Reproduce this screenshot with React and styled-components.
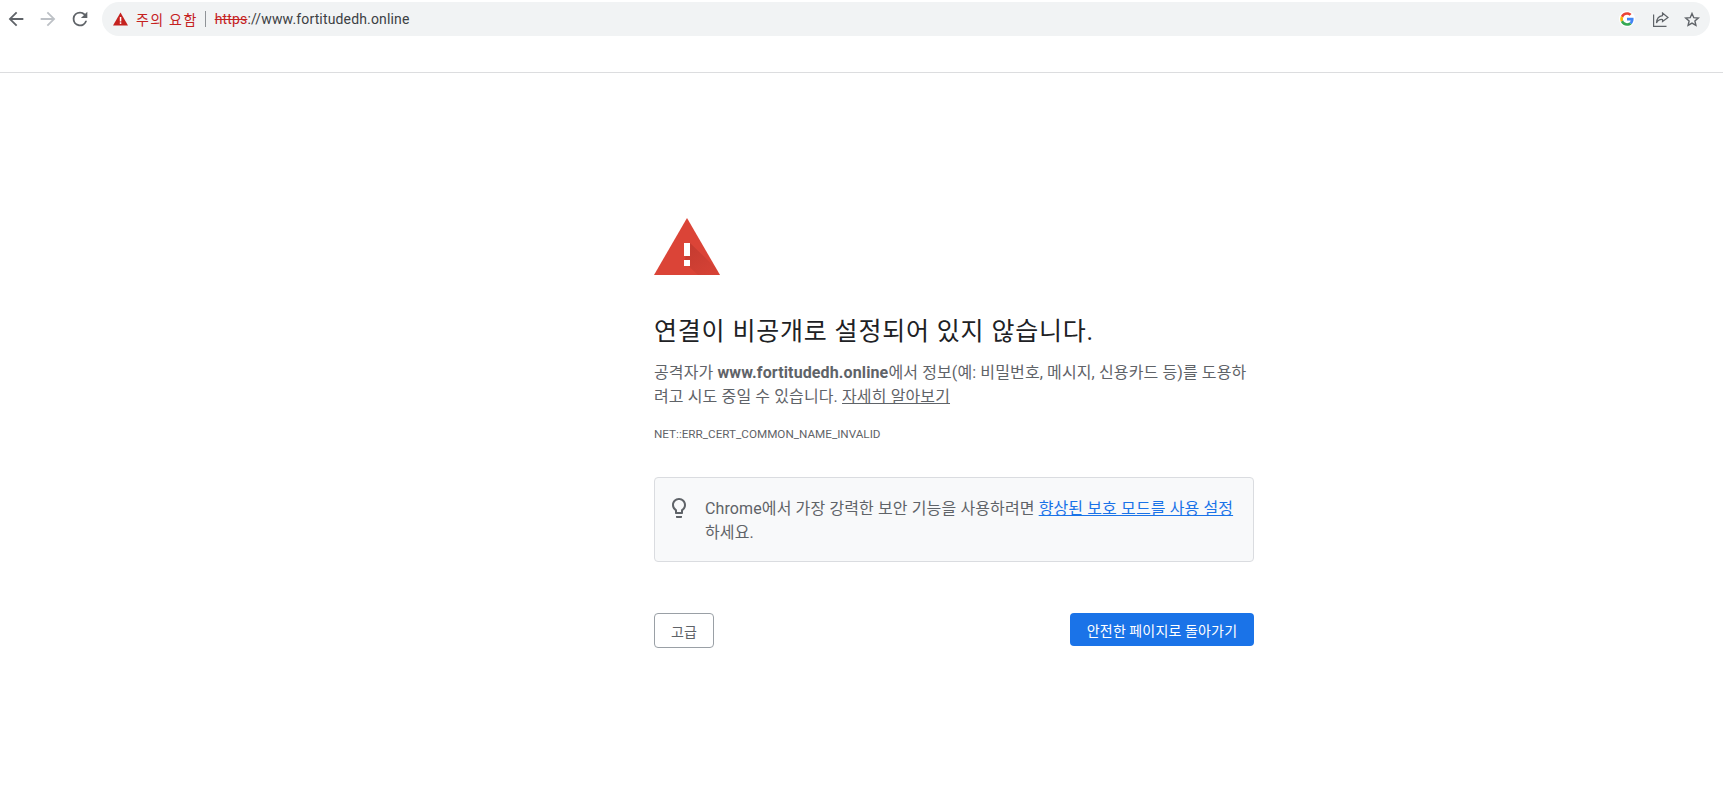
import React from 'react';
import styled, { createGlobalStyle } from 'styled-components';

const Global = createGlobalStyle`
  html, body { margin: 0; padding: 0; background: #fff; }
  body { font-family: Roboto, "Noto Sans CJK KR", sans-serif; overflow: hidden; }
`;
const Page = styled.div`width: 1723px; height: 795px; display: flex; flex-direction: column; overflow: hidden;`;
const Toolbar = styled.header`border-bottom: 1px solid #dcdddf; padding-top: 2px; height: 70px; display: flex; align-items: flex-start;`;
const NavGroup = styled.div`display: flex; gap: 10px; padding: 6px 0 0 5px; width: 95px; box-sizing: border-box;`;
const NavIcon = styled.svg`width: 22px; height: 22px; display: block; fill: ${p => p.$c};`;
const Omnibox = styled.div`margin-left: 7px; width: 1608px; height: 34px; background: #f1f3f4; border-radius: 17px; display: flex; align-items: center; padding: 0 10px 0 11px; box-sizing: border-box;`;
const Warn = styled.span`color: #c5221f; font: 14px "Noto Sans CJK KR", sans-serif; margin-left: 8px; letter-spacing: 1.4px;`;
const Sep = styled.span`width: 1px; height: 16px; background: #8f9397; margin: 0 9px 0 7px;`;
const Url = styled.span`font: 14px Roboto, sans-serif; color: #3c4043; letter-spacing: 0.15px;`;
const Struck = styled.span`color: #c5221f; text-decoration: line-through;`;
const Actions = styled.div`margin-left: auto; display: flex; align-items: center; gap: 15px;`;
const GoogleMark = styled.svg`margin-right: 3px; background: #fff; border-radius: 50%;`;
const Main = styled.main`margin-left: 654px; width: 600px; padding-top: 145px; color: #5f6368;`;
const DangerIcon = styled.svg`display: block;`;
const Heading = styled.h1`margin: 39px 0 0; font-size: 25px; line-height: 36px; font-weight: 400; color: #202124; letter-spacing: 0.8px;`;
const Para = styled.p`margin: 11px 0 0; font-size: 16px; line-height: 24px; letter-spacing: 0.12px;`;
const Learn = styled.a`color: #5f6368; text-decoration: underline;`;
const Code = styled.div`margin-top: 16px; font-size: 11.7px; line-height: 18px; color: #5f6368;`;
const Tip = styled.div`margin-top: 34px; height: 64px; padding: 19px 15px 0 12px; border: 1px solid #dadce0; border-radius: 4px; background: #f8f9fa; display: flex; gap: 14px; width: 571px;`;
const Bulb = styled.svg`flex: none; margin-top: -1px;`;
const TipText = styled.div`font-size: 16px; line-height: 24px; letter-spacing: 0.12px;`;
const Blue = styled.a`color: #1a73e8; text-decoration: underline;`;
const Buttons = styled.div`margin-top: 51px; display: flex; justify-content: space-between; align-items: flex-start;`;
const Ghost = styled.button`width: 60px; height: 35px; background: #fff; border: 1px solid #9aa0a6; border-radius: 4px; color: #5f6368; font: 14px "Noto Sans CJK KR", sans-serif; padding: 0;`;
const Primary = styled.button`width: 184px; height: 33px; background: #1a73e8; border: none; border-radius: 4px; color: #fff; font: 14px "Noto Sans CJK KR", sans-serif; letter-spacing: 0.2px; padding: 0;`;

export default function App() {
  return (
    <Page>
      <Global />
      <Toolbar>
        <NavGroup>
          <NavIcon $c="#5f6368" viewBox="0 0 24 24"><path d="M20 11H7.83l5.59-5.59L12 4l-8 8 8 8 1.41-1.41L7.83 13H20v-2z" /></NavIcon>
          <NavIcon $c="#bdc1c6" viewBox="0 0 24 24"><path d="M4 11h12.17l-5.59-5.59L12 4l8 8-8 8-1.41-1.41L16.17 13H4v-2z" /></NavIcon>
          <NavIcon $c="#5f6368" viewBox="0 0 24 24"><path d="M17.65 6.35A7.96 7.96 0 0 0 12 4a8 8 0 1 0 7.73 10h-2.08A6 6 0 1 1 12 6c1.66 0 3.14.69 4.22 1.78L13 11h7V4l-2.35 2.35z" /></NavIcon>
        </NavGroup>
        <Omnibox>
          <svg width="15" height="14" viewBox="0 0 15 14"><path d="M7.5 0.5 15 13.5H0z" fill="#c5221f" /><rect x="6.8" y="5" width="1.5" height="4.5" fill="#fff" /><rect x="6.8" y="10.3" width="1.5" height="1.6" fill="#fff" /></svg>
          <Warn>주의 요함</Warn>
          <Sep />
          <Url><Struck>https</Struck>://www.fortitudedh.online</Url>
          <Actions>
            <GoogleMark width="16" height="16" viewBox="-4 -4 56 56"><path fill="#EA4335" d="M24 9.5c3.5 0 6.700 1.300 9.100 3.500l6.800-6.800C35.800 2.400 30.300 0 24 0 14.600 0 6.500 5.400 2.600 13.200l7.900 6.200C12.400 13.700 17.700 9.500 24 9.500z"/><path fill="#4285F4" d="M47 24.500c0-1.600-.100-3.100-.4-4.500H24v9h12.900c-.6 3-2.200 5.500-4.700 7.200l7.600 5.900C44.200 38 47 31.800 47 24.500z"/><path fill="#FBBC05" d="M10.500 28.600A14.500 14.500 0 0 1 10.500 19.400l-7.900-6.200a24 24 0 0 0 0 21.600z"/><path fill="#34A853" d="M24 48c6.500 0 11.900-2.100 15.800-5.900l-7.600-5.900c-2.100 1.400-4.900 2.300-8.200 2.300-6.300 0-11.600-4.200-13.500-9.900l-7.900 6.200C6.500 42.600 14.600 48 24 48z"/></GoogleMark>
            <svg width="16" height="15" viewBox="0 0 16 15" fill="none" stroke="#5f6368" strokeWidth="1.2"><path d="M.6 2.500V14.400H13.500" /><path d="M9.500 1 15 5.500 9.500 9.500V7.500C7 7.300 4.700 8.500 3.500 11 3.700 7 6 4 9.500 3.600z" /></svg>
            <svg width="16" height="15" viewBox="0 0 16 15" fill="none" stroke="#5f6368" strokeWidth="1.4"><path d="M8 1.500 9.800 5.700 14.300 6.100 10.900 9 11.900 13.400 8 11.100 4.100 13.400 5.100 9 1.700 6.100 6.200 5.700z" /></svg>
          </Actions>
        </Omnibox>
      </Toolbar>
      <Main>
        <DangerIcon width="66" height="57" viewBox="0 0 66 57">
          <defs>
            <linearGradient id="fold" x1="0.1" y1="0" x2="0.9" y2="1">
              <stop offset="0" stopColor="#b0332a" stopOpacity="0.55" />
              <stop offset="1" stopColor="#b0332a" stopOpacity="0.1" />
            </linearGradient>
          </defs>
          <path d="M33 0 66 57H0z" fill="#db4437" />
          <path d="M36 25 62 50 66 57H44L30 44z" fill="url(#fold)" />
          <rect x="30" y="25" width="6" height="13" fill="#fff" />
          <rect x="30" y="42" width="6" height="6" fill="#fff" />
        </DangerIcon>
        <Heading>연결이 비공개로 설정되어 있지 않습니다.</Heading>
        <Para>공격자가 <b>www.fortitudedh.online</b>에서 정보(예: 비밀번호, 메시지, 신용카드 등)를 도용하려고 시도 중일 수 있습니다. <Learn>자세히 알아보기</Learn></Para>
        <Code>NET::ERR_CERT_COMMON_NAME_INVALID</Code>
        <Tip>
          <Bulb width="24" height="24" viewBox="0 0 24 24" fill="#5f6368"><path d="M9 21c0 .55.45 1 1 1h4c.55 0 1-.45 1-1v-1H9v1zm3-19C8.140 2 5 5.140 5 9c0 2.380 1.190 4.470 3 5.740V17c0 .55.45 1 1 1h6c.55 0 1-.45 1-1v-2.260c1.810-1.270 3-3.360 3-5.740 0-3.860-3.140-7-7-7zm2.850 11.100l-.85.6V16h-4v-2.300l-.85-.6A4.997 4.997 0 0 1 7 9c0-2.760 2.240-5 5-5s5 2.240 5 5c0 1.630-.8 3.160-2.150 4.100z" /></Bulb>
          <TipText>Chrome에서 가장 강력한 보안 기능을 사용하려면 <Blue>향상된 보호 모드를 사용 설정</Blue><br />하세요.</TipText>
        </Tip>
        <Buttons>
          <Ghost>고급</Ghost>
          <Primary>안전한 페이지로 돌아가기</Primary>
        </Buttons>
      </Main>
    </Page>
  );
}
